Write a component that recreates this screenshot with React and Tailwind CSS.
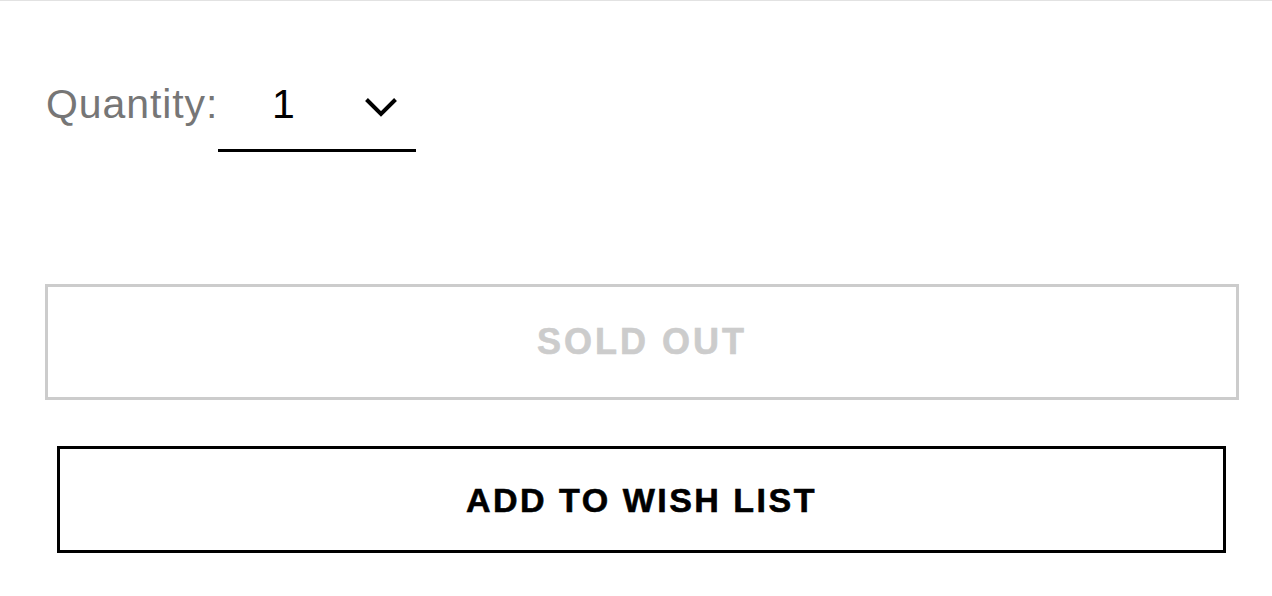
export default function App() {
  return (
    <div
      className="w-[1272px] h-[596px] bg-white border-t border-[#e2e2e2] overflow-hidden"
      style={{ fontFamily: '"Liberation Sans", Arial, sans-serif' }}
    >
      <div className="flex items-start ml-[46px] mt-[80px]">
        <span className="text-[41px] leading-[46px] text-[#767676] tracking-[0.9px] w-[172px]">Quantity:</span>
        <div className="w-[198px] h-[71px] border-b-[3px] border-black flex items-start justify-between pl-[54px] pr-[18px]">
          <span className="text-[41px] leading-[46px] text-black">1</span>
          <svg width="34" height="21" viewBox="0 0 34 21" className="mt-[16px]" fill="none">
            <polyline points="2.5,2.5 17,17 31.5,2.5" stroke="#000" strokeWidth="4" />
          </svg>
        </div>
      </div>
      <div className="ml-[45px] w-[1194px] mt-[132px] flex flex-col">
        <div className="h-[116px] border-[3px] border-[#cccccc] flex items-center justify-center">
          <span className="text-[36px] font-bold tracking-[3px] text-[#cccccc] leading-none [-webkit-text-stroke:0.6px_#cccccc]">SOLD OUT</span>
        </div>
        <div className="mt-[46px] ml-[12px] w-[1169px] h-[107px] border-[3px] border-black flex items-center justify-center">
          <span className="text-[34px] font-bold tracking-[2.5px] text-black leading-none [-webkit-text-stroke:0.6px_#000]">ADD TO WISH LIST</span>
        </div>
      </div>
    </div>
  );
}
